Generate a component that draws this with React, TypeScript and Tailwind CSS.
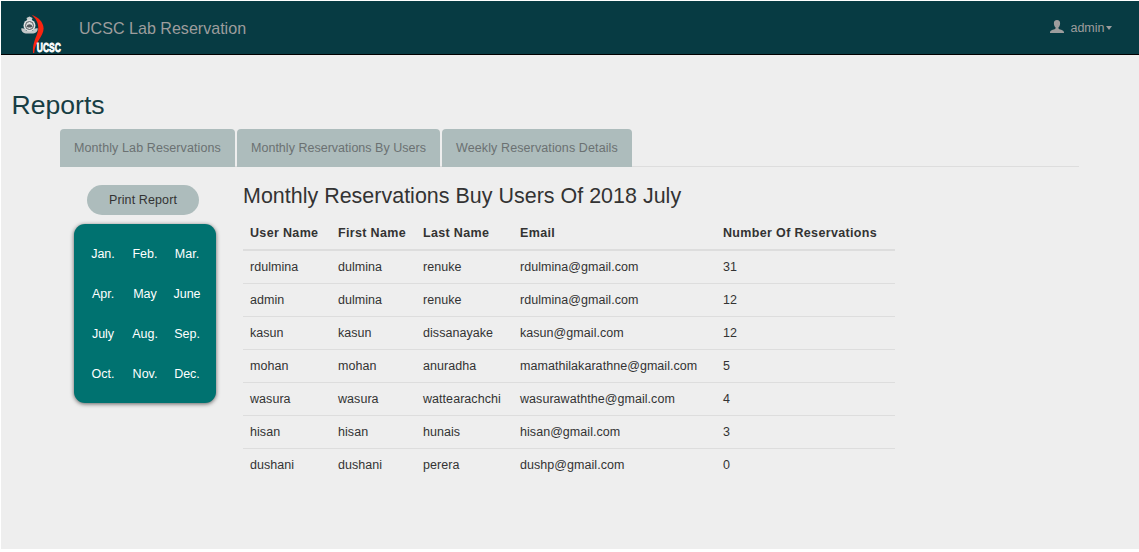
const tabs = [
  { label: 'Monthly Lab Reservations', style: 'w-[175px] tracking-[0.1px]' },
  { label: 'Monthly Reservations By Users', style: 'w-[203px] tracking-[0.02px]' },
  { label: 'Weekly Reservations Details', style: 'w-[190px] tracking-[0.11px]' },
];

const months = ['Jan.', 'Feb.', 'Mar.', 'Apr.', 'May', 'June', 'July', 'Aug.', 'Sep.', 'Oct.', 'Nov.', 'Dec.'];

const headers = ['User Name', 'First Name', 'Last Name', 'Email', 'Number Of Reservations'];

const rows = [
  ['rdulmina', 'dulmina', 'renuke', 'rdulmina@gmail.com', '31'],
  ['admin', 'dulmina', 'renuke', 'rdulmina@gmail.com', '12'],
  ['kasun', 'kasun', 'dissanayake', 'kasun@gmail.com', '12'],
  ['mohan', 'mohan', 'anuradha', 'mamathilakarathne@gmail.com', '5'],
  ['wasura', 'wasura', 'wattearachchi', 'wasurawaththe@gmail.com', '4'],
  ['hisan', 'hisan', 'hunais', 'hisan@gmail.com', '3'],
  ['dushani', 'dushani', 'perera', 'dushp@gmail.com', '0'],
];

function Logo() {
  return (
    <svg className="h-[40px] w-[48px] overflow-visible" viewBox="0 0 48 40">
      <path d="M11.500 .8C18 3 23.600 8 23.600 14.500 23.600 22 15 28 14.200 39H13C12 27 18.500 21 18.300 13.500 18.200 8.500 15.500 4 11.500 .8Z" fill="#fb2410" />
      <path d="M1.200 14.500c2.500-.5 4 .5 5 2.500h6.600c1-2 2.500-3 5-2.500 0 3-2 4.500-4.500 5H5.700c-2.500-.5-4.500-2-4.500-5Z" fill="#c3c6c7" />
      <path d="m9.500 2.500 3 1.500-1 3h-4l-1-3Z" fill="#c9cccc" />
      <circle cx="9.500" cy="11.500" r="6" fill="#dfe1e1" />
      <circle cx="9.500" cy="11.500" r="4" fill="none" stroke="#555d60" strokeWidth="1" />
      <path d="M6.500 12.500c1-3 5-3 6 0l-1.500 1H8Z" fill="#50575a" />
      <text x="16.800" y="38.400" fontFamily="Liberation Sans Narrow, Liberation Sans, sans-serif" fontSize="12.800" fontWeight="700" fill="#fff" stroke="#fff" strokeWidth=".8" textLength="24" lengthAdjust="spacingAndGlyphs">UCSC</text>
    </svg>
  );
}

export default function App() {
  return (
    <div className="h-[552px] overflow-hidden bg-white pt-px pl-px font-['Liberation_Sans',Arial,sans-serif] text-[12.5px] leading-[18px] text-[#333]">
      <div className="h-[548px] bg-[#eee]">
        <nav className="flex h-[54px] items-center border-b border-black bg-[#073b43] text-[#9d9d9d]">
          <div className="ml-[19px] h-[40px] w-[48px] self-end"><Logo /></div>
          <span className="ml-[11px] text-[16.1px] tracking-[-0.01px]">UCSC Lab Reservation</span>
          <div className="mr-[27px] ml-auto flex items-center">
            <svg className="-mt-[2px] h-[13px] w-[14px]" viewBox="0 0 14 13" fill="currentColor">
              <path d="M7 0C4.800 0 3.800 1.500 3.900 3.400c.1 1.700.6 3 1.600 3.900v1.200C5.500 9.400 0 10 0 12.200V13h14v-.8C14 10 8.500 9.400 8.500 8.500V7.300c1-.9 1.500-2.200 1.600-3.900C10.200 1.500 9.200 0 7 0Z" />
            </svg>
            <span className="ml-[6px]">admin</span>
            <span className="ml-[1.5px] border-x-[3.5px] border-t-4 border-x-transparent border-t-current" />
          </div>
        </nav>

        <h1 className="mt-[35px] ml-[10.5px] h-[30px] text-[26.6px] leading-[30px] text-[#173d43]">Reports</h1>

        <div className="mt-[9px] mr-[60px] ml-[59px] flex h-[38px] gap-[2px] border-b border-[#ddd]">
          {tabs.map((tab) => (
            <a key={tab.label} className={`flex h-[38px] shrink-0 items-center rounded-t-[4px] bg-[#adbcbc] pl-[14px] whitespace-nowrap text-[#6b7172] ${tab.style}`}>
              {tab.label}
            </a>
          ))}
        </div>

        <main className="flex">
          <aside className="mt-[18px] ml-[73px] flex w-[142px] flex-col">
            <button className="ml-[13px] h-[30px] w-[112px] rounded-full bg-[#adbcbc] tracking-[0.12px]">Print Report</button>
            <div className="mt-[9px] grid h-[179px] grid-cols-[41px_43px_41px] grid-rows-[40px_40px_40px_40px] justify-items-center rounded-[11px] bg-[#007270] pt-[10px] pl-[8.5px] leading-[40px] text-white shadow-[0_1px_4px_rgba(0,0,0,0.6)]">
              {months.map((month) => <a key={month}>{month}</a>)}
            </div>
          </aside>

          <section className="ml-[27px] w-[652px]">
            <h2 className="mt-[17px] h-[25px] text-[21.45px] leading-[25px] tracking-[0.02px] whitespace-nowrap">Monthly Reservations Buy Users Of 2018 July</h2>
            <table className="mt-[9px] w-[652px] table-fixed border-separate border-spacing-0 text-left">
              <colgroup>
                <col className="w-[88px]" />
                <col className="w-[85px]" />
                <col className="w-[97px]" />
                <col className="w-[203px]" />
                <col className="w-[179px]" />
              </colgroup>
              <thead>
                <tr className="h-[33px]">
                  {headers.map((header) => (
                    <th key={header} className="border-b-2 border-[#ddd] px-[7px] pb-[2px] tracking-[0.34px] whitespace-nowrap">{header}</th>
                  ))}
                </tr>
              </thead>
              <tbody>
                {rows.map((row, i) => (
                  <tr key={row[0]} className={i === 0 ? 'h-[32px]' : 'h-[33px]'}>
                    {row.map((cell, j) => (
                      <td key={j} className={`px-[7px] tracking-[0.05px] whitespace-nowrap ${i === 0 ? '' : 'border-t border-[#ddd]'}`}>{cell}</td>
                    ))}
                  </tr>
                ))}
              </tbody>
            </table>
          </section>
        </main>
      </div>
    </div>
  );
}
